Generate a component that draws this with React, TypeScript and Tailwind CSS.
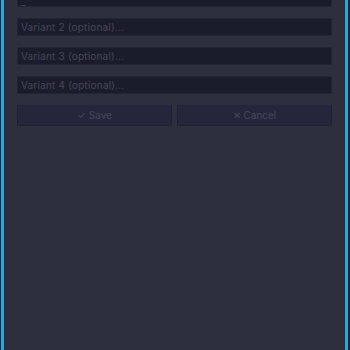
export default function App() {
  const fields = ["Variant 2 (optional)...", "Variant 3 (optional)...", "Variant 4 (optional)..."];
  return (
    <div className="w-[350px] h-[350px] overflow-hidden bg-[#23243a]">
      <div
        className="ml-[1px] w-[347px] h-[350px] overflow-hidden bg-[#2d2e3e] border-x-[3px] border-[#2aa9d2]"
        style={{ fontFamily: "Inter, 'Liberation Sans', sans-serif" }}
      >
        <div className="-mt-[11px] pl-[13px] pr-[13px] flex flex-col gap-[11px]">
          <div className="h-[18px] bg-[#1b1c2b] border border-[#232436] text-[10px] text-[#45465a] px-[3px] flex items-end leading-[10px]">
            _
          </div>
          {fields.map((f) => (
            <input
              key={f}
              placeholder={f}
              className="h-[18px] bg-[#1b1c2b] border border-[#232436] text-[10px] tracking-[0.2px] px-[3px] outline-none placeholder:text-[#45465a]"
            />
          ))}
          <div className="flex gap-[5px] -mt-[1px]">
            <button className="flex-1 h-[22px] bg-[#25263a] border border-[#1f2031] border-t-[#2c2d42] text-[10px] text-[#47485c]">
              ✓ Save
            </button>
            <button className="flex-1 h-[22px] bg-[#25263a] border border-[#1f2031] border-t-[#2c2d42] text-[10px] text-[#47485c]">
              ✕ Cancel
            </button>
          </div>
        </div>
      </div>
    </div>
  );
}
